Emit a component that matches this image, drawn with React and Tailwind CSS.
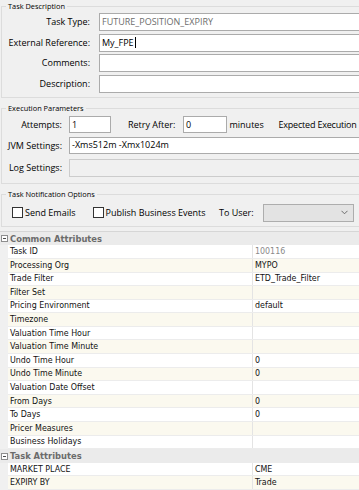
import React from "react";

const rows = [
  { header: true, label: "Common Attributes" },
  { label: "Task ID", value: "100116", gray: true, i: 0 },
  { label: "Processing Org", value: "MYPO", i: 1 },
  { label: "Trade Filter", value: "ETD_Trade_Filter", i: 2 },
  { label: "Filter Set", i: 3 },
  { label: "Pricing Environment", value: "default", i: 4 },
  { label: "Timezone", i: 5 },
  { label: "Valuation Time Hour", i: 6 },
  { label: "Valuation Time Minute", i: 7 },
  { label: "Undo Time Hour", value: "0", i: 8 },
  { label: "Undo Time Minute", value: "0", i: 9 },
  { label: "Valuation Date Offset", i: 10 },
  { label: "From Days", value: "0", i: 11 },
  { label: "To Days", value: "0", i: 12 },
  { label: "Pricer Measures", i: 13 },
  { label: "Business Holidays", i: 14 },
  { header: true, label: "Task Attributes" },
  { label: "MARKET PLACE", value: "CME", i: 0 },
  { label: "EXPIRY BY", value: "Trade", i: 1 },
];

function Legend({ children }) {
  return (
    <legend className="ml-[4px] px-[2px] text-[7.4px] leading-[11px] text-black">
      {children}
    </legend>
  );
}

function TextBox({ children, className = "", h = "h-[18px]", gray = false, disabled = false }) {
  return (
    <div
      className={`${h} flex items-center border px-[2px] ${
        disabled ? "bg-[#f0f0f0] border-[#cccccc]" : "bg-white border-[#ababab]"
      } ${gray ? "text-[#6d6d6d]" : "text-black"} ${className}`}
    >
      {children}
    </div>
  );
}

function Check() {
  return <div className="w-[11px] h-[11px] border border-[#333333] bg-white shrink-0" />;
}

export default function App() {
  return (
    <div className="w-[359px] h-[490px] overflow-hidden bg-[#f0f0f0] flex flex-col">
      <div className="h-[232px] w-[359px] overflow-hidden font-['Open_Sans',sans-serif] text-[9px] text-black">
        <div className="w-[460px]">
          <fieldset className="ml-[1px] mt-[0.5px] border border-[#dcdcdc] pt-[1.5px] pb-[4px]">
            <Legend>Task Description</Legend>
            <div className="grid grid-cols-[88px_1fr] gap-x-[9px] gap-y-[2.5px] items-center">
              <div className="text-right leading-[18px]">Task Type:</div>
              <TextBox gray>FUTURE_POSITION_EXPIRY</TextBox>
              <div className="text-right leading-[18px]">External Reference:</div>
              <TextBox>
                My_FPE<span className="inline-block w-[1px] h-[11px] bg-black ml-[1px]" />
              </TextBox>
              <div className="text-right leading-[18px]">Comments:</div>
              <TextBox />
              <div className="text-right leading-[18px]">Description:</div>
              <TextBox />
            </div>
          </fieldset>

          <fieldset className="ml-[1px] mt-[5px] border border-[#dcdcdc] pt-[2.5px] pb-[6px]">
            <Legend>Execution Parameters</Legend>
            <div className="grid grid-cols-[60px_1fr] gap-x-[7px] items-center">
              <div className="text-right leading-[17px]">Attempts:</div>
              <div className="flex items-center">
                <TextBox h="h-[17px]" className="w-[42px]">1</TextBox>
                <span className="ml-[17px] w-[55px]">Retry After:</span>
                <TextBox h="h-[17px]" className="w-[44px]">0</TextBox>
                <span className="ml-[2.5px] w-[49px]">minutes</span>
                <span className="whitespace-nowrap tracking-[-0.2px]">Expected Execution</span>
              </div>
              <div className="text-right leading-[17px] mt-[3.5px]">JVM Settings:</div>
              <TextBox h="h-[17px]" className="mt-[3.5px]">-Xms512m -Xmx1024m</TextBox>
              <div className="text-right leading-[18px] mt-[5.5px]">Log Settings:</div>
              <TextBox disabled className="mt-[5.5px]" />
            </div>
          </fieldset>

          <fieldset className="ml-[1px] mt-[4.5px] border border-[#dcdcdc] pt-[4px] pb-[4.5px]">
            <Legend>Task Notification Options</Legend>
            <div className="flex items-center h-[18px] pl-[10px]">
              <div className="w-[81px] flex items-center gap-[2px]">
                <Check />
                <span>Send Emails</span>
              </div>
              <div className="w-[126px] flex items-center gap-[1.5px]">
                <Check />
                <span className="whitespace-nowrap">Publish Business Events</span>
              </div>
              <span className="w-[44px]">To User:</span>
              <div className="w-[91px] h-[18px] border border-[#adadad] bg-[#e3e3e3] flex items-center justify-end pr-[5px]">
                <svg width="7" height="5" viewBox="0 0 7 5">
                  <path d="M0.5 0.8 L3.5 3.8 L6.5 0.8" fill="none" stroke="#606060" strokeWidth="0.9" />
                </svg>
              </div>
            </div>
          </fieldset>
        </div>
      </div>

      <div className="border-t border-[#d6d6d6] font-['DejaVu_Sans_Condensed','DejaVu_Sans',sans-serif] text-[8.8px]">
        {rows.map((r, idx) =>
          r.header ? (
            <div key={idx} className="h-[13.6px] bg-[#ebebeb] flex items-center">
              <div className="w-[8px] h-full flex items-center justify-center">
                <div className="w-[7px] h-[7px] border border-[#8e8e8e] bg-white flex items-center justify-center">
                  <div className="w-[3px] h-[1px] bg-[#4a4a4a]" />
                </div>
              </div>
              <span className="pl-[2px] font-bold text-[#6b6b6b] text-[9.3px]">{r.label}</span>
            </div>
          ) : (
            <div key={idx} className="h-[13.6px] flex">
              <div className="w-[8px] h-full bg-[#f0f0f0]" />
              <div
                className={`flex-1 flex border-b border-[#ececec] ${
                  r.i % 2 === 1 ? "bg-[#fbf9ef]" : "bg-white"
                }`}
              >
                <div className="w-[245px] border-r border-[#e4e4e4] pl-[2px] flex items-center text-[#111111]">
                  {r.label}
                </div>
                <div
                  className={`flex-1 pl-[2px] flex items-center ${
                    r.gray ? "text-[#8a8a8a]" : "text-[#111111]"
                  }`}
                >
                  {r.value || ""}
                </div>
              </div>
            </div>
          )
        )}
      </div>
    </div>
  );
}
